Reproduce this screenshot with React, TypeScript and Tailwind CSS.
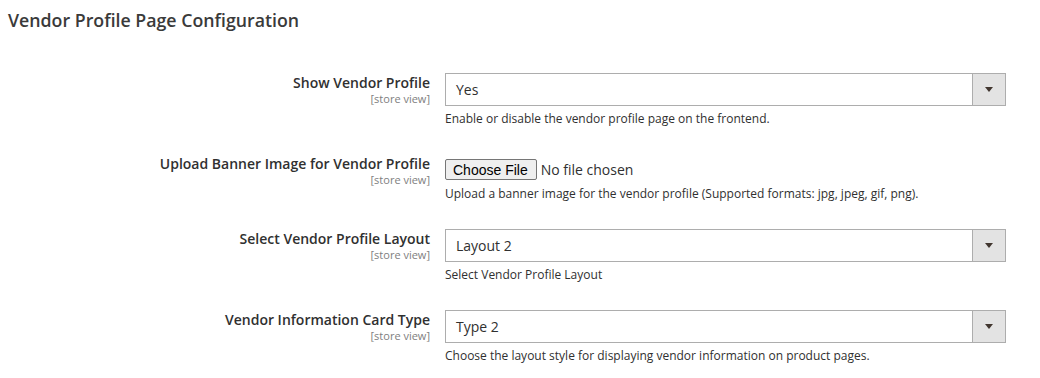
import React from 'react';

type Row = {
    label: string;
    kind: 'select' | 'file';
    value?: string;
    note: string;
};

const rows: Row[] = [
    { label: 'Show Vendor Profile', kind: 'select', value: 'Yes', note: 'Enable or disable the vendor profile page on the frontend.' },
    { label: 'Upload Banner Image for Vendor Profile', kind: 'file', note: 'Upload a banner image for the vendor profile (Supported formats: jpg, jpeg, gif, png).' },
    { label: 'Select Vendor Profile Layout', kind: 'select', value: 'Layout 2', note: 'Select Vendor Profile Layout' },
    { label: 'Vendor Information Card Type', kind: 'select', value: 'Type 2', note: 'Choose the layout style for displaying vendor information on product pages.' },
];

const SelectBox: React.FC<{ value: string }> = ({ value }) => (
    <div className="flex h-[33px] w-full border border-[#adadad] bg-white">
        <div className="flex flex-1 items-center pl-[10px] text-[14px] text-[#303030]">{value}</div>
        <div className="flex w-[33px] items-center justify-center border-l border-[#adadad] bg-[#e3e3e3]">
            <svg width="8" height="5" viewBox="0 0 8 5">
                <path d="M0 0 H8 L4 5 Z" fill="#41362f" />
            </svg>
        </div>
    </div>
);

const FilePicker: React.FC = () => (
    <div className="flex items-center">
        <button
            type="button"
            className="flex h-[21px] items-center rounded-[2px] border border-[#767676] bg-[#efefef] pl-[7px] pr-[8px] font-['Liberation_Sans',Arial,sans-serif] text-[14px] leading-none text-black">
            Choose File
        </button>
        <span className="ml-[4px] text-[14px] leading-[21px] text-[#303030]">No file chosen</span>
    </div>
);

export default function App() {
    return (
        <div className="h-[378px] w-[1040px] bg-white font-['Open_Sans',sans-serif] text-[#303030]">
            <h2 className="pl-[8px] pt-[8px] text-[17.75px] font-semibold leading-[24px] text-[#3a3a3a]">
                Vendor Profile Page Configuration
            </h2>

            <div className="mt-[41px] flex flex-col gap-[26px]">
                {rows.map((row) => (
                    <div key={row.label} className="flex">
                        <div className="w-[430px] text-right">
                            <div className="text-[14px] font-semibold leading-[19px] text-[#303030]">{row.label}</div>
                            <div className="text-[11px] leading-[13px] text-[#808080]">[store view]</div>
                        </div>
                        <div className={`ml-[15px] w-[561px] ${row.kind === 'file' ? 'pt-[5px]' : ''}`}>
                            {row.kind === 'select' ? <SelectBox value={row.value ?? ''} /> : <FilePicker />}
                            <div className={`${row.kind === 'file' ? 'mt-[5px]' : 'mt-[4px]'} text-[12px] leading-[18px] text-[#303030]`}>
                                {row.note}
                            </div>
                        </div>
                    </div>
                ))}
            </div>
        </div>
    );
}
